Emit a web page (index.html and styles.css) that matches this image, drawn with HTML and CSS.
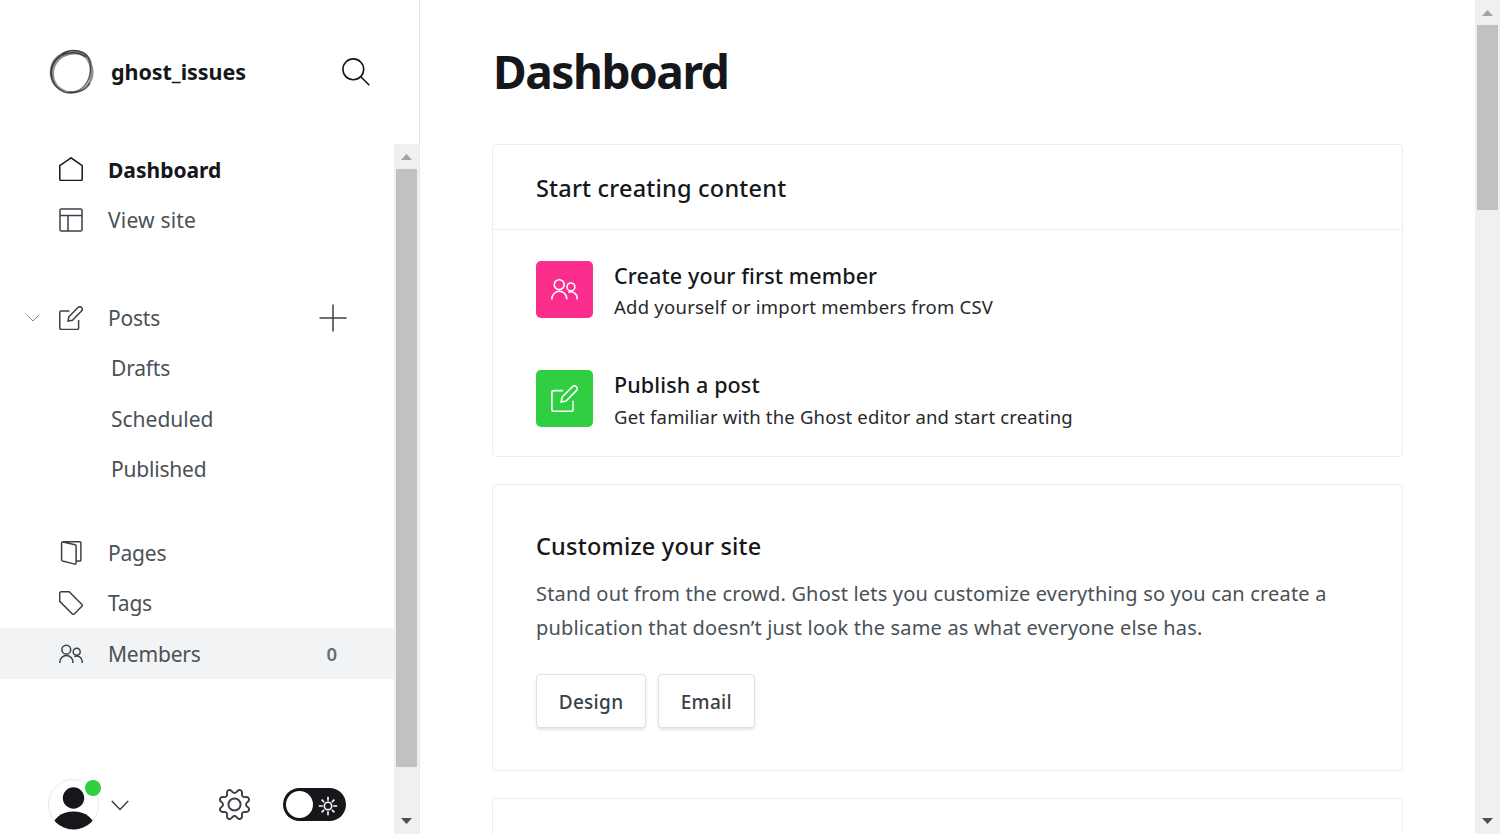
FILE: index.html
```
<!DOCTYPE html>
<html lang="en">
<head>
<meta charset="utf-8">
<title>Dashboard</title>
<link rel="stylesheet" href="styles.css">
</head>
<body>
<svg class="defs" aria-hidden="true">
  <symbol id="pen" viewBox="0 0 24 24"><path d="M10.5 5H2.200A1.400 1.400 0 0 0 .8 6.400V22a1.400 1.400 0 0 0 1.400 1.400h16a1.400 1.400 0 0 0 1.400-1.400V14M9.900 10.700l9.100-9.200a2.400 2.400 0 0 1 3.500 3.500l-9.100 9.200-4.400.9z"/></symbol>
  <symbol id="people" viewBox="0 0 24 24"><circle cx="7.3" cy="7.700" r="4.400"/><path d="M.8 20.900v-.7a6.600 6.600 0 0 1 13.200 0v.7"/><circle cx="17.700" cy="9.700" r="3.500"/><path d="M15.300 14.600a5.500 5.500 0 0 1 7.900 5.100v1.200"/></symbol>
</svg>
<div class="app">
  <aside class="sidebar">
    <header class="brand">
      <svg class="brand-logo" viewBox="0 0 48 48"><g fill="#222" stroke="#222"><path opacity=".5" stroke="none" fill-rule="evenodd" d="M25 2C35 1 43 7 44 16c3 8 2 17-5 23-8 8-22 8-30 1C1 34 0 23 4 14 8 7 15 3 25 2zM26 6.500C14.500 7 6 14.500 6 26c0 10 8 17.500 19 17.500S42 36 42 25 37.500 6 26 6.500z"/><g fill="none"><path d="M38 9C28 2 14 4 7 13-1 24 4 39 16 44c10 3 22-1 26-9" stroke-width="1.500" opacity=".7"/><path d="M14 6C22 0 36 2 40.500 10c3 6 2.500 12 1 18-3 11-11 17-21 16" stroke-width="1.400" opacity=".7"/><path d="M20 3.500C8 7 1 18 4 29" stroke-width="1.200" opacity=".5"/></g></g></svg>
      <span class="brand-name">ghost_issues</span>
      <svg class="search" viewBox="0 0 28 28"><circle cx="11.300" cy="11.300" r="10.400"/><path d="M18.800 18.800l8.500 8.400"/></svg>
    </header>
    <div class="sidebar-body">
      <div class="sidebar-col">
        <nav class="nav">
          <a class="nav-item current"><svg class="icon home" viewBox="0 0 24 24"><path d="M12 .8L.8 8.600v13.700a1.200 1.200 0 0 0 1.200 1.200h20a1.200 1.200 0 0 0 1.200-1.200V8.600z"/></svg>Dashboard</a>
          <a class="nav-item view"><svg class="icon" viewBox="0 0 24 24"><rect x="1" y="1" width="22" height="22" rx="1.300"/><path d="M1 7.500h22M9 7.500V23"/></svg>View site</a>
          <a class="nav-item posts"><svg class="caret" viewBox="0 0 14 8"><path d="M.6.6L7 7 13.400.6"/></svg><svg class="icon"><use href="#pen"/></svg>Posts<svg class="plus" viewBox="0 0 28 28"><path d="M14 .5v27M.5 14h27"/></svg></a>
          <a class="nav-item sub">Drafts</a>
          <a class="nav-item sub scheduled">Scheduled</a>
          <a class="nav-item sub">Published</a>
          <a class="nav-item pages"><svg class="icon" viewBox="0 0 24 24"><path d="M3.500.8h17.200a1.200 1.200 0 0 1 1.200 1.200v16.900a1.200 1.200 0 0 1-1.200 1.200h-3.600M3.900.9l12.200 2.900a1.400 1.400 0 0 1 1 1.300v17a1 1 0 0 1-1.300 1L3.600 20a1.400 1.400 0 0 1-1-1.300V2A1.100 1.100 0 0 1 3.900.9z"/></svg>Pages</a>
          <a class="nav-item"><svg class="icon" viewBox="0 0 24 24"><path d="M10.200.8H2A1.300 1.300 0 0 0 .7 2.100v8.200l12.700 12.700a1.300 1.300 0 0 0 1.800 0l7.700-7.700a1.300 1.300 0 0 0 0-1.800z"/></svg>Tags</a>
          <a class="nav-item hovered"><svg class="icon"><use href="#people"/></svg><span>Members</span><span class="count">0</span></a>
        </nav>
        <footer class="account">
          <div class="avatar"><svg viewBox="0 0 51 51"><defs><clipPath id="disc"><circle cx="25.500" cy="25.500" r="25"/></clipPath></defs><circle cx="25.500" cy="25.500" r="25" fill="#fff" stroke="#e6e9eb"/><circle cx="25.500" cy="19" r="10.700" fill="#15171a"/><ellipse cx="25.500" cy="50" rx="22" ry="17.500" fill="#15171a" clip-path="url(#disc)"/></svg><i class="status"></i></div>
          <svg class="user-caret" viewBox="0 0 18 11"><path d="M.8 1L9 9.500 17.200 1"/></svg>
          <svg class="gear" viewBox="0 0 24 24"><path d="M10.546 2.438a1.957 1.957 0 0 0 2.908 0L14.400 1.400a1.959 1.959 0 0 1 3.410 1.413l-.071 1.400a1.958 1.958 0 0 0 2.051 2.054l1.400-.071a1.959 1.959 0 0 1 1.410 3.410l-1.042.94a1.960 1.960 0 0 0 0 2.909l1.042.94a1.959 1.959 0 0 1-1.413 3.410l-1.400-.071a1.958 1.958 0 0 0-2.056 2.056l.071 1.400A1.959 1.959 0 0 1 14.400 22.600l-.941-1.041a1.959 1.959 0 0 0-2.908 0L9.606 22.600A1.959 1.959 0 0 1 6.200 21.192l.072-1.400a1.958 1.958 0 0 0-2.056-2.056l-1.400.071A1.958 1.958 0 0 1 1.400 14.400l1.041-.94a1.960 1.960 0 0 0 0-2.909L1.400 9.606A1.958 1.958 0 0 1 2.809 6.200l1.400.071a1.958 1.958 0 0 0 2.058-2.060L6.200 2.810A1.959 1.959 0 0 1 9.606 1.400z"/><circle cx="12" cy="12" r="4.700"/></svg>
          <div class="toggle"><span class="knob"></span><svg class="sun" viewBox="0 0 20 20"><circle cx="10" cy="10" r="3.700"/><path d="M10 .8v4M10 15.200v4M.8 10h4M15.200 10h4M3.600 3.600l2.600 2.600M13.800 13.800l2.600 2.600M3.600 16.400l2.600-2.600M13.800 6.200l2.600-2.600"/></svg></div>
        </footer>
      </div>
      <div class="scrollbar"><i class="arrow up"></i><i class="thumb"></i><i class="arrow down"></i></div>
    </div>
  </aside>
  <main class="content">
    <h1 class="title">Dashboard</h1>
    <section class="card">
      <h2 class="card-head">Start creating content</h2>
      <div class="steps">
        <div class="step"><span class="tile pink"><svg><use href="#people"/></svg></span><div><h3>Create your first member</h3><p>Add yourself or import members from CSV</p></div></div>
        <div class="step second"><span class="tile green"><svg><use href="#pen"/></svg></span><div><h3>Publish a post</h3><p>Get familiar with the Ghost editor and start creating</p></div></div>
      </div>
    </section>
    <section class="card customize">
      <h2>Customize your site</h2>
      <p>Stand out from the crowd. Ghost lets you customize everything so you can create a<br>publication that doesn’t just look the same as what everyone else has.</p>
      <div class="actions"><button class="btn">Design</button><button class="btn">Email</button></div>
    </section>
    <section class="card next"></section>
  </main>
  <div class="scrollbar page"><i class="arrow up"></i><i class="thumb"></i><i class="arrow down"></i></div>
</div>
</body>
</html>
```
FILE: styles.css
```
* { box-sizing: border-box; }
body, h1, h2, h3, p { margin: 0; font-weight: 400; }
body { font-family: "Noto Sans", "Open Sans", sans-serif; color: #15171a; background: #fff; overflow: hidden; }
svg { fill: none; stroke: currentColor; flex: none; }
.defs { display: none; }
.app { display: flex; height: 834px; overflow: hidden; }
.sidebar { width: 420px; flex: none; border-right: 1px solid #e6e9eb; display: flex; flex-direction: column; }
.brand { height: 144px; flex: none; display: flex; align-items: center; padding: 0 49.500px 0 48px; }
.brand-logo { width: 48px; height: 48px; }
.brand-name { flex: 1; margin: -2px 0 0 15px; font-size: 21.500px; font-weight: 700; letter-spacing: -.05px; }
.search { width: 28px; height: 28px; stroke-width: 1.600; margin-top: .5px; }
.sidebar-body { flex: 1; display: flex; min-height: 0; }
.sidebar-col { flex: 1; display: flex; flex-direction: column; }
.nav { flex: 1; padding-top: .6px; }
.nav-item { display: flex; align-items: center; height: 50.200px; padding-left: 59px; font-size: 21px; letter-spacing: -.2px; color: #4a5157; }
.icon { width: 24px; height: 24px; margin-right: 25px; stroke-width: 1.500; color: #394047; }
.current, .home { color: #15171a; }
.home { margin-top: -1px; }
.current { font-weight: 700; letter-spacing: 0; }
.view { letter-spacing: .2px; }
.posts { margin: 47.600px 0 .5px; padding-left: 26px; padding-right: 47px; }
.caret { width: 14px; height: 8px; margin-right: 19px; color: #7c8b9a; }
.plus { width: 28px; height: 28px; margin-left: auto; stroke-width: 1.500; color: #394047; }
.sub { padding-left: 111px; }
.scheduled { letter-spacing: 0; }
.pages { margin-top: 34px; }
.hovered { background: #f1f3f4; height: 51px; padding-right: 57px; }
.count { margin: -1px 0 0 auto; font-size: 18.500px; font-weight: 600; letter-spacing: 0; color: #626d79; }
.account { height: 55px; flex: none; display: flex; align-items: flex-start; padding-left: 48px; }
.avatar { position: relative; width: 51px; height: 51px; }
.avatar svg { display: block; width: 51px; height: 51px; stroke: none; }
.status { position: absolute; left: 37px; top: 1px; width: 16px; height: 16px; border-radius: 50%; background: #30cf43; }
.user-caret { width: 18px; height: 11px; margin: 21px 0 0 12px; stroke-width: 1.500; color: #394047; }
.gear { width: 31px; height: 31px; margin: 10px 0 0 90px; stroke-width: 1.500; color: #394047; }
.toggle { display: flex; align-items: center; width: 63px; height: 33px; margin: 9px 0 0 33px; padding: 0 8px 0 3px; border-radius: 17px; background: #15171a; color: #fff; }
.knob { width: 27px; height: 27px; border-radius: 50%; background: #fff; }
.sun { width: 20px; height: 20px; margin: 3px 0 0 auto; stroke-width: 1.600; }
.scrollbar { width: 25px; flex: none; background: #f0f0f0; display: flex; flex-direction: column; align-items: center; }
.scrollbar .thumb { width: 21px; height: 598px; background: #c1c1c1; }
.page .thumb { height: 185px; }
.arrow { flex: none; height: 25px; width: 11px; display: flex; align-items: center; justify-content: center; }
.arrow::before { content: ""; width: 11px; height: 6px; background: #a3a3a3; clip-path: polygon(0 100%, 50% 0, 100% 100%); margin-top: 1px; }
.down { margin-top: auto; }
.down::before { background: #505050; clip-path: polygon(0 0, 100% 0, 50% 100%); margin-top: -1px; }
.content { flex: 1; padding: 0 72px; }
.title { height: 144px; line-height: 142px; padding-left: 1px; font-size: 46px; font-weight: 700; letter-spacing: -1.450px; }
.card { border: 1px solid #ebeef0; border-radius: 4px; margin-bottom: 27px; }
.card-head { height: 85px; line-height: 87px; padding-left: 43px; font-size: 23.500px; font-weight: 500; letter-spacing: .2px; border-bottom: 1px solid #ebeef0; }
.steps { height: 226px; padding: 31px 43px 0; display: flex; flex-direction: column; gap: 52px; }
.step { display: flex; gap: 21px; height: 57px; }
.tile { width: 57px; height: 57px; border-radius: 5px; display: flex; align-items: center; justify-content: center; color: #fff; }
.tile svg { width: 27px; height: 27px; stroke-width: 1.400; }
.pink { background: #fb2d8d; }
.green { background: #30cf43; }
.step h3 { font-size: 21.500px; line-height: 30px; font-weight: 500; letter-spacing: .12px; }
.step p { font-size: 18.500px; line-height: 32px; letter-spacing: .240px; color: #27292c; }
.second p { line-height: 34px; letter-spacing: .170px; }
.customize { height: 287px; padding: 43px 43px 0; }
.customize h2 { font-size: 23.500px; line-height: 36px; font-weight: 500; letter-spacing: .2px; }
.customize p { margin-top: 13px; font-size: 20px; line-height: 34px; letter-spacing: .180px; color: #4a5157; white-space: nowrap; }
.actions { display: flex; gap: 12px; margin-top: 29px; }
.btn { height: 54px; padding: 2px 21.700px 0; border: 1px solid #dde1e5; border-radius: 4px; background: #fff; box-shadow: 0 2px 3px rgba(0,0,0,.1); font: 500 19px "Noto Sans", sans-serif; letter-spacing: .3px; color: #394047; }
.next { height: 100px; }
```
